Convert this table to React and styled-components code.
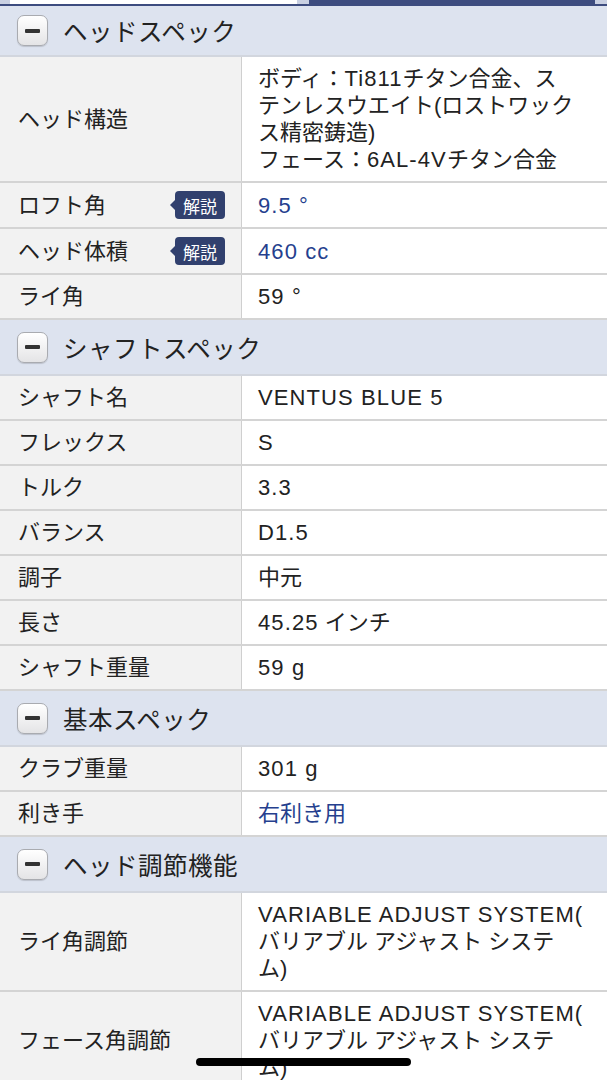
import React from 'react'
import styled, { createGlobalStyle } from 'styled-components'

const GlobalStyle = createGlobalStyle `
  html, body {
    margin: 0;
    padding: 0;
    background: #fff;
  }
  body {
    font-family: "Liberation Sans", "Noto Sans CJK JP", sans-serif;
    color: #222;
  }
`

const TabBar = styled.div `
  display: flex;
  gap: 12px;
  height: 4px;
  padding: 0 12px 0 10px;
  background: #c9d0e2;
  border-bottom: 2px solid #3d4c7f;
`

const Tab = styled.div `
  flex: 1;
  background: ${p => p.active ? '#fff' : '#3d4c7f'};
`

const SectionHeader = styled.div `
  display: flex;
  align-items: center;
  gap: 15px;
  height: ${p => p.first ? 49 : 54}px;
  padding: 0 17px;
  background: #dde3ef;
  border-bottom: 2px solid #d2d6de;
`

const MinusButton = styled.div `
  display: flex;
  align-items: center;
  justify-content: center;
  width: 29px;
  height: 29px;
  border: 1px solid #a9abb0;
  border-radius: 7px;
  background: linear-gradient(#ffffff, #e4e4e6);
  box-shadow: 0 1px 1px rgba(0, 0, 0, 0.15);

  &::before {
    content: '';
    width: 15px;
    height: 4px;
    border-radius: 1px;
    background: #333;
  }
`

const Title = styled.h2 `
  margin: 0;
  font-size: 24.5px;
  font-weight: normal;
  color: #222;
  letter-spacing: 0.5px;
`

const Row = styled.div `
  display: grid;
  grid-template-columns: 242px 1fr;
  border-bottom: 2px solid #d4d4d4;
`

const Label = styled.div `
  display: flex;
  align-items: center;
  justify-content: space-between;
  padding: 8px 16px 8px 18px;
  background: #f2f2f2;
  border-right: 1px solid #cfcfcf;
  font-size: 22px;
  line-height: 27px;
`

const Value = styled.div `
  padding: 8px 16px;
  font-size: 22px;
  line-height: 27px;
  color: ${p => p.link ? '#253f8e' : '#222'};
  display: flex;
  flex-direction: column;
  justify-content: center;
`

// latin glyphs in the original are a touch wider than Arial
const Latin = styled.span `
  letter-spacing: 1.1px;
`

const Badge = styled.span `
  position: relative;
  display: inline-flex;
  align-items: center;
  justify-content: center;
  width: 50px;
  height: 28px;
  border-radius: 4px;
  background: #31406e;
  color: #fff;
  font-family: "Noto Sans CJK JP", sans-serif;
  font-size: 17px;
  line-height: 1;

  &::before {
    content: '';
    position: absolute;
    left: -5px;
    top: 9px;
    border-top: 5px solid transparent;
    border-bottom: 5px solid transparent;
    border-right: 5px solid #31406e;
  }
`

const HomeIndicator = styled.div `
  position: fixed;
  left: 196px;
  bottom: 14px;
  width: 215px;
  height: 8px;
  border-radius: 4px;
  background: #000;
`

const sections = [
  {
    title: 'ヘッドスペック',
    rows: [
      { label: 'ヘッド構造', lines: ['ボディ：Ti811チタン合金、ス', 'テンレスウエイト(ロストワック', 'ス精密鋳造)', 'フェース：6AL-4Vチタン合金'] },
      { label: 'ロフト角', badge: true, link: true, lines: ['9.5 °'] },
      { label: 'ヘッド体積', badge: true, link: true, lines: ['460 cc'] },
      { label: 'ライ角', lines: ['59 °'] },
    ],
  },
  {
    title: 'シャフトスペック',
    rows: [
      { label: 'シャフト名', lines: ['VENTUS BLUE 5'] },
      { label: 'フレックス', lines: ['S'] },
      { label: 'トルク', lines: ['3.3'] },
      { label: 'バランス', lines: ['D1.5'] },
      { label: '調子', lines: ['中元'] },
      { label: '長さ', lines: ['45.25 インチ'] },
      { label: 'シャフト重量', lines: ['59 g'] },
    ],
  },
  {
    title: '基本スペック',
    rows: [
      { label: 'クラブ重量', lines: ['301 g'] },
      { label: '利き手', link: true, lines: ['右利き用'] },
    ],
  },
  {
    title: 'ヘッド調節機能',
    rows: [
      { label: 'ライ角調節', lines: ['VARIABLE ADJUST SYSTEM(', 'バリアブル アジャスト システ', 'ム)'] },
      { label: 'フェース角調節', lines: ['VARIABLE ADJUST SYSTEM(', 'バリアブル アジャスト システ', 'ム)'] },
    ],
  },
]

const renderLine = line =>
  line.split(/([A-Za-z0-9.\-°]+(?: [A-Za-z0-9.\-°(]+)*\(?)/).map((part, i) =>
    i % 2 ? <Latin key={i}>{part}</Latin> : part
  )

const App = () => (
  <>
    <GlobalStyle />
    <TabBar>
      <Tab active />
      <Tab />
    </TabBar>
    {sections.map((section, i) => (
      <section key={section.title}>
        <SectionHeader first={i === 0}>
          <MinusButton />
          <Title>{section.title}</Title>
        </SectionHeader>
        {section.rows.map(row => (
          <Row key={row.label}>
            <Label>
              <span>{row.label}</span>
              {row.badge && <Badge>解説</Badge>}
            </Label>
            <Value link={row.link}>
              {row.lines.map(line => <span key={line}>{renderLine(line)}</span>)}
            </Value>
          </Row>
        ))}
      </section>
    ))}
    <HomeIndicator />
  </>
)

export default App
